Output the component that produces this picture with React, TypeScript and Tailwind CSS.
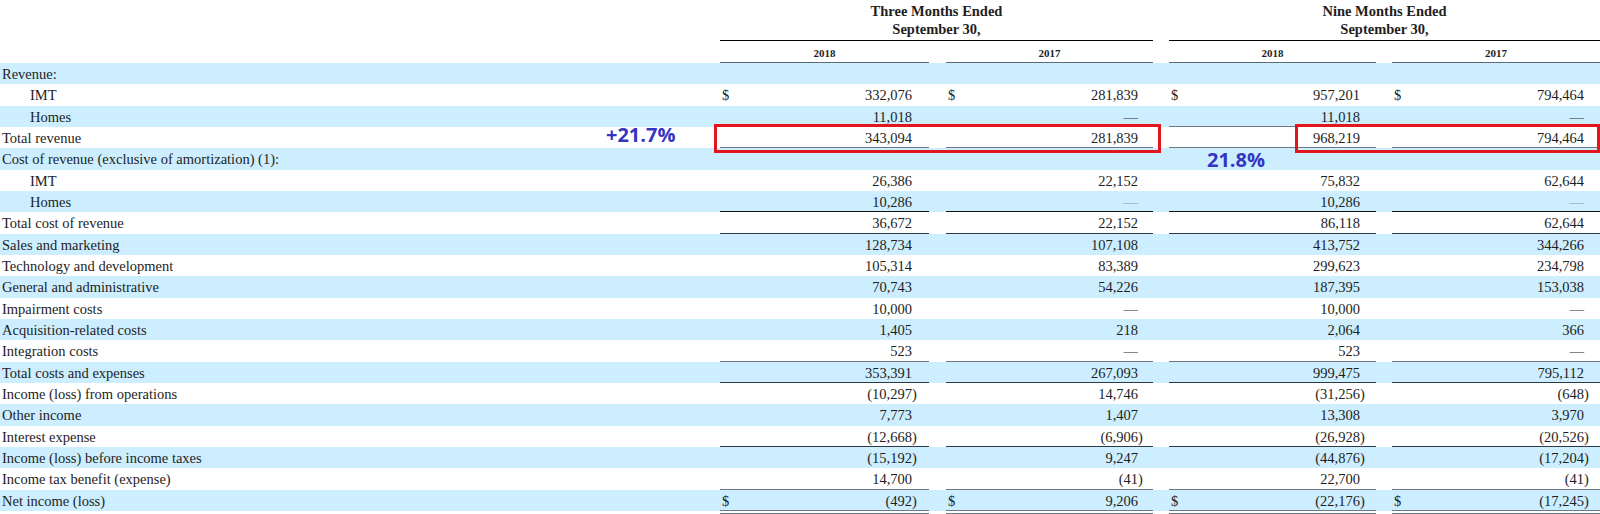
import React from "react";

type Border = "none" | "gray" | "dark" | "black";
type Row = { label: string; indent?: boolean; vals?: string[]; border?: Border; dollars?: boolean };

const rows: Row[] = [
  { label: "Revenue:" },
  { label: "IMT", indent: true, vals: ["332,076", "281,839", "957,201", "794,464"], dollars: true },
  { label: "Homes", indent: true, vals: ["11,018", "—", "11,018", "—"], border: "gray" },
  { label: "Total revenue", vals: ["343,094", "281,839", "968,219", "794,464"], border: "gray" },
  { label: "Cost of revenue (exclusive of amortization) (1):" },
  { label: "IMT", indent: true, vals: ["26,386", "22,152", "75,832", "62,644"] },
  { label: "Homes", indent: true, vals: ["10,286", "~", "10,286", "~"], border: "black" },
  { label: "Total cost of revenue", vals: ["36,672", "22,152", "86,118", "62,644"], border: "dark" },
  { label: "Sales and marketing", vals: ["128,734", "107,108", "413,752", "344,266"] },
  { label: "Technology and development", vals: ["105,314", "83,389", "299,623", "234,798"] },
  { label: "General and administrative", vals: ["70,743", "54,226", "187,395", "153,038"] },
  { label: "Impairment costs", vals: ["10,000", "—", "10,000", "—"] },
  { label: "Acquisition-related costs", vals: ["1,405", "218", "2,064", "366"] },
  { label: "Integration costs", vals: ["523", "—", "523", "—"], border: "gray" },
  { label: "Total costs and expenses", vals: ["353,391", "267,093", "999,475", "795,112"], border: "dark" },
  { label: "Income (loss) from operations", vals: ["(10,297)", "14,746", "(31,256)", "(648)"] },
  { label: "Other income", vals: ["7,773", "1,407", "13,308", "3,970"] },
  { label: "Interest expense", vals: ["(12,668)", "(6,906)", "(26,928)", "(20,526)"], border: "dark" },
  { label: "Income (loss) before income taxes", vals: ["(15,192)", "9,247", "(44,876)", "(17,204)"] },
  { label: "Income tax benefit (expense)", vals: ["14,700", "(41)", "22,700", "(41)"], border: "gray" },
  { label: "Net income (loss)", vals: ["(492)", "9,206", "(22,176)", "(17,245)"], border: "gray", dollars: true },
];

const colW = ["w-[209px]", "w-[207px]", "w-[207px]", "w-[208px]"];
const colPr = ["pr-[12px]", "pr-[10px]", "pr-[11px]", "pr-[11px]"];
const gapW = ["w-[17px]", "w-[16px]", "w-[16px]"];

function borderCls(b: Border | undefined) {
  if (b === "gray") return "border-b-[1.5px] border-[#6d7982]";
  if (b === "dark") return "border-b-[1.5px] border-[#2c3a45]";
  if (b === "black") return "border-b border-[#111111]";
  return "";
}

function Cell({ v, i, dollar, border }: { v: string; i: number; dollar?: boolean; border?: Border }) {
  const neg = v.startsWith("(");
  const gray = v === "~";
  const text = gray ? "—" : neg ? v.slice(0, -1) : v;
  return (
    <div className={`${colW[i]} ${colPr[i]} pl-[2px] flex justify-between pt-[1px] leading-[20px] ${borderCls(border)}`}>
      <span>{dollar ? "$" : ""}</span>
      <span className="flex">
        <span className={gray ? "text-[#8a949b]" : ""}>{text}</span>
        <span className="w-[5px]">{neg ? ")" : ""}</span>
      </span>
    </div>
  );
}

export default function App() {
  return (
    <div
      className="relative w-[1600px] h-[514px] overflow-hidden bg-white text-[14.5px] text-[#1e1e1e]"
      style={{ fontFamily: '"Liberation Serif", "Times New Roman", serif' }}
    >
      {/* Header */}
      <div className="flex h-[41px]">
        <div className="w-[720px]" />
        <div className="w-[433px] border-b border-black text-center font-bold pt-[3px] leading-[17.5px]">
          <div>Three Months Ended</div>
          <div>September 30,</div>
        </div>
        <div className="w-[16px]" />
        <div className="w-[431px] border-b border-black text-center font-bold pt-[3px] leading-[17.5px]">
          <div>Nine Months Ended</div>
          <div>September 30,</div>
        </div>
      </div>
      <div className="flex h-[22px] text-[11px] font-bold">
        <div className="w-[720px]" />
        {["2018", "2017", "2018", "2017"].map((y, i) => (
          <React.Fragment key={i}>
            <div className={`${colW[i]} border-b-[1.5px] border-[#5e6a73] text-center pt-[3px] leading-[18px]`}>{y}</div>
            {i < 3 && <div className={gapW[i]} />}
          </React.Fragment>
        ))}
      </div>

      {/* Body */}
      {rows.map((r, ri) => (
        <div
          key={ri}
          className={`relative flex h-[21.33px] ${ri % 2 === 0 ? "bg-[#cceeff]" : "bg-white"} ${ri === 4 ? "overflow-hidden" : ""}`}
        >
          <div className={`w-[720px] pt-[1px] leading-[20px] whitespace-nowrap ${r.indent ? "pl-[30px]" : "pl-[2px]"}`}>
            {r.label}
          </div>
          {r.vals
            ? r.vals.map((v, i) => (
                <React.Fragment key={i}>
                  <Cell v={v} i={i} dollar={r.dollars} border={r.border} />
                  {i < 3 && <div className={gapW[i]} />}
                </React.Fragment>
              ))
            : null}
          {ri === 4 && (
            <div
              className="absolute left-[1207px] top-[2px] text-[20px] leading-[20px] font-bold text-[#3535c4]"
              style={{ fontFamily: '"Open Sans", sans-serif' }}
            >
              21.8%
            </div>
          )}
        </div>
      ))}
      {/* double rule under net income */}
      <div className="flex h-[3px]">
        <div className="w-[720px]" />
        {[0, 1, 2, 3].map((i) => (
          <React.Fragment key={i}>
            <div className={`${colW[i]} border-b border-[#6d7982]`} />
            {i < 3 && <div className={gapW[i]} />}
          </React.Fragment>
        ))}
      </div>

      {/* Annotations */}
      <div
        className="absolute left-[606px] top-[125px] text-[20px] leading-[20px] font-bold text-[#3535c4]"
        style={{ fontFamily: '"Open Sans", sans-serif' }}
      >
        +21.7%
      </div>
      <div className="absolute left-[714px] top-[124px] w-[447px] h-[29px] border-[3px] border-[#e3161c]" />
      <div className="absolute left-[1295px] top-[124px] w-[305px] h-[29px] border-[3px] border-[#e3161c]" />
    </div>
  );
}
